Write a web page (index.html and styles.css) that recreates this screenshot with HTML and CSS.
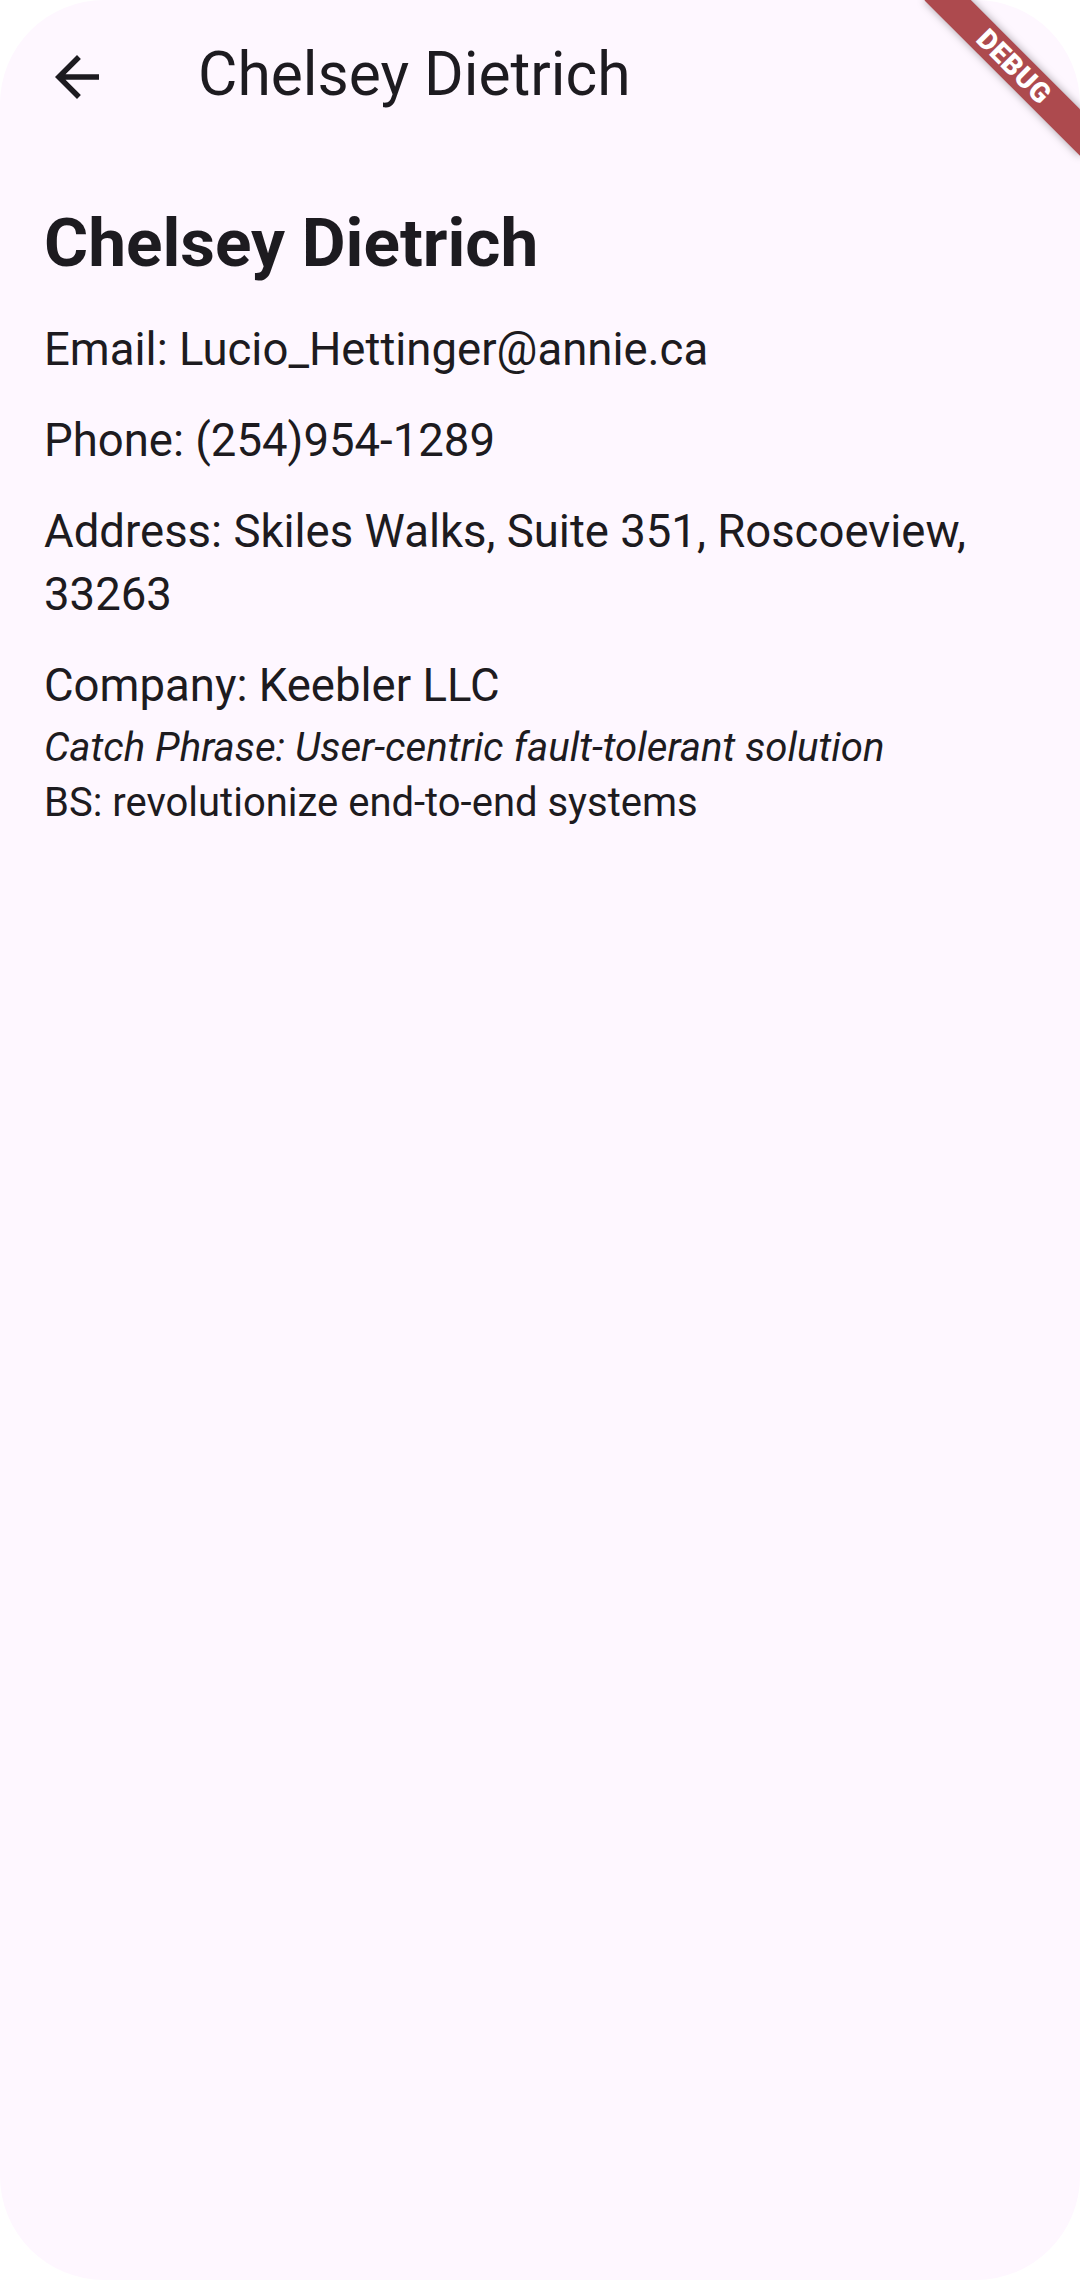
FILE: index.html
```html
<!DOCTYPE html>
<html lang="en">
<head>
<meta charset="utf-8">
<title>Chelsey Dietrich</title>
<link rel="stylesheet" href="styles.css">
</head>
<body>
<div class="screen">
  <header class="appbar">
    <div class="leading">
      <svg class="back" viewBox="0 0 24 24" width="66" height="66" aria-hidden="true">
        <path d="M20 11H7.83l5.59-5.59L12 4l-8 8 8 8 1.41-1.41L7.83 13H20v-2z"/>
      </svg>
    </div>
    <h1 class="title">Chelsey Dietrich</h1>
  </header>
  <main class="content">
    <h2 class="name">Chelsey Dietrich</h2>
    <p class="field">Email: Lucio_Hettinger@annie.ca</p>
    <p class="field">Phone: (254)954-1289</p>
    <p class="field">Address: Skiles Walks, Suite 351, Roscoeview, 33263</p>
    <p class="field">Company: Keebler LLC</p>
    <p class="small italic">Catch Phrase: User-centric fault-tolerant solution</p>
    <p class="small">BS: revolutionize end-to-end systems</p>
  </main>
  <div class="debug-banner">DEBUG</div>
</div>
</body>
</html>
```
FILE: styles.css
```css
html, body {
  margin: 0;
  padding: 0;
  background: #ffffff;
}

body {
  font-family: Roboto, "Noto Sans", "Liberation Sans", sans-serif;
  color: #1d1b20;
}

.screen {
  position: relative;
  width: 1080px;
  height: 2280px;
  background: #fef7ff;
  border-radius: 104px;
  overflow: hidden;
}

.appbar {
  display: flex;
  align-items: center;
  height: 154px;
}

.leading {
  width: 154px;
  height: 154px;
  display: flex;
  align-items: center;
  justify-content: center;
  flex-shrink: 0;
}

.back {
  display: block;
  fill: #1d1b20;
}

.title {
  margin: 0 0 0 44px;
  padding-bottom: 4px;
  font-size: 60.5px;
  font-weight: 400;
  line-height: 80px;
  white-space: nowrap;
}

.content {
  padding: 45px 44px 0 44px;
}

.name {
  margin: 0;
  font-size: 67.5px;
  font-weight: 700;
  line-height: 88px;
}

.field {
  margin: 28px 0 0 0;
  font-size: 45.5px;
  line-height: 63px;
}

.name + .field {
  margin-top: 31px;
}

.small {
  margin: 0;
  font-size: 40px;
  line-height: 55px;
}

.field + .small {
  margin-top: 3px;
}

.italic {
  font-size: 40.2px;
  font-style: italic;
}

.debug-banner {
  position: absolute;
  left: 904px;
  top: 50px;
  width: 220px;
  height: 33px;
  transform: rotate(45deg);
  background: #ad4a4e;
  box-shadow: 0 0 8px rgba(0, 0, 0, 0.35);
  color: #ffffff;
  font-size: 28px;
  font-weight: 900;
  line-height: 33px;
  text-align: center;
  letter-spacing: 0.5px;
}
```
